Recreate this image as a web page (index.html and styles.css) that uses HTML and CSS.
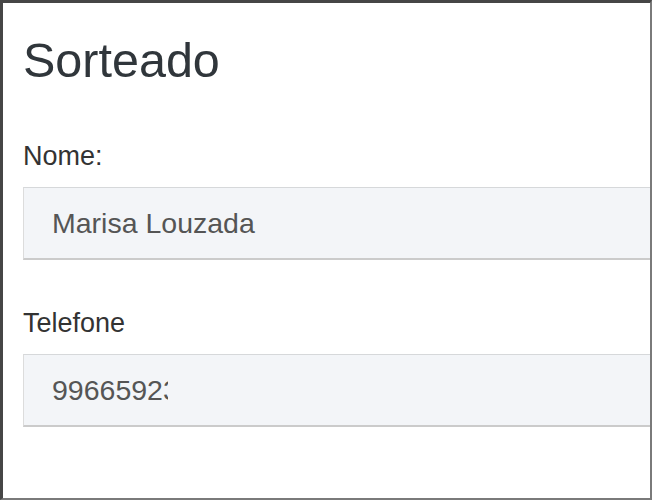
FILE: index.html
```html
<!DOCTYPE html>
<html lang="pt">
<head>
<meta charset="utf-8">
<title>Sorteado</title>
<link rel="stylesheet" href="styles.css">
</head>
<body>
<div class="frame">
  <h3 class="title">Sorteado</h3>
  <div class="group">
    <label class="label">Nome:</label>
    <div class="field"><span class="value">Marisa Louzada</span></div>
  </div>
  <div class="group">
    <label class="label">Telefone</label>
    <div class="field"><span class="value value-clip">996659235</span></div>
  </div>
</div>
</body>
</html>
```

FILE: styles.css
```css
html, body {
  margin: 0;
  padding: 0;
  background: #ffffff;
}

.frame {
  box-sizing: border-box;
  width: 652px;
  height: 500px;
  border-top: 3px solid #464646;
  border-left: 3px solid #464646;
  border-right: 2px solid #7a7a7a;
  border-bottom: 2px solid #7a7a7a;
  padding: 29px 0 0 20px;
  overflow: hidden;
  font-family: "Liberation Sans", Arial, sans-serif;
  color: #333333;
}

.title {
  margin: 0;
  font-size: 48.5px;
  line-height: 56px;
  font-weight: normal;
  color: #30363b;
}

.group {
  display: flex;
  flex-direction: column;
}

.title + .group {
  margin-top: 52px;
}

.group + .group {
  margin-top: 47px;
}

.label {
  font-size: 27px;
  line-height: 32px;
  margin-bottom: 15px;
  color: #333333;
}

.field {
  box-sizing: border-box;
  height: 73px;
  display: flex;
  align-items: center;
  padding-left: 28px;
  background: #f3f5f8;
  border-top: 1px solid #d6d8da;
  border-left: 1px solid #dcdcdc;
  border-bottom: 2px solid #cbcbcb;
}

.value {
  font-size: 28.5px;
  line-height: 32px;
  color: #555555;
  white-space: nowrap;
}

.value-clip {
  display: inline-block;
  width: 116px;
  overflow: hidden;
}
```
